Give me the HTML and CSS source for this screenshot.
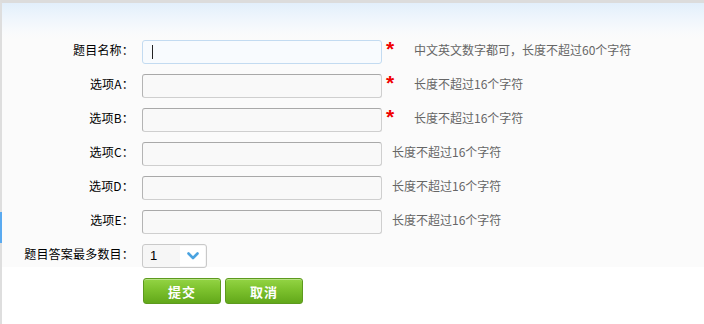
FILE: index.html
```html
<!DOCTYPE html>
<html lang="zh-CN">
<head>
    <meta charset="UTF-8">
    <title>添加题目</title>
    <link rel="stylesheet" href="styles.css">
</head>
<body>
    <div class="frame">
        <!-- left side marker -->
        <div class="side-mark"></div>

        <div class="panel">
            <div class="row">
                <label class="label">题目名称：</label>
                <div class="field focus"><span class="caret"></span></div>
                <span class="star">*</span>
                <span class="hint">中文英文数字都可，长度不超过60个字符</span>
            </div>
            <div class="row">
                <label class="label">选项A：</label>
                <div class="field"></div>
                <span class="star">*</span>
                <span class="hint">长度不超过16个字符</span>
            </div>
            <div class="row">
                <label class="label">选项B：</label>
                <div class="field"></div>
                <span class="star">*</span>
                <span class="hint">长度不超过16个字符</span>
            </div>
            <div class="row">
                <label class="label">选项C：</label>
                <div class="field"></div>
                <span class="hint plain">长度不超过16个字符</span>
            </div>
            <div class="row">
                <label class="label">选项D：</label>
                <div class="field"></div>
                <span class="hint plain">长度不超过16个字符</span>
            </div>
            <div class="row">
                <label class="label">选项E：</label>
                <div class="field"></div>
                <span class="hint plain">长度不超过16个字符</span>
            </div>
            <div class="row">
                <label class="label">题目答案最多数目：</label>
                <div class="select">
                    <span class="select-value">1</span>
                    <span class="select-btn">
                        <svg width="12" height="8" viewBox="0 0 12 8">
                            <path d="M1.5 1.5 L6 6 L10.5 1.5" fill="none" stroke="#4aa3e0" stroke-width="2.6" stroke-linecap="round" stroke-linejoin="round"/>
                        </svg>
                    </span>
                </div>
            </div>
        </div>

        <div class="actions">
            <button class="btn">提交</button>
            <button class="btn">取消</button>
        </div>
    </div>
</body>
</html>
```

FILE: styles.css
```css
body, html {
    margin: 0;
    padding: 0;
    background: #ffffff;
    font-family: "Noto Sans CJK SC", "Liberation Sans", sans-serif;
    font-size: 12px;
}

/* outer frame with grey top and left edges */
.frame {
    position: relative;
    height: 321px;
    border-top: 3px solid #dcdcdc;
    border-left: 2px solid #dedede;
}

.side-mark {
    position: absolute;
    left: -2px;
    top: 209px;
    width: 2px;
    height: 31px;
    background: #5aaaf0;
}

/* light panel holding the fields */
.panel {
    height: 227px;
    padding-top: 37px;
    background: linear-gradient(to bottom, #e2effb 0px, #eef5fc 14px, #f8fafc 28px, #fbfbfb 36px, #fbfbfb 100%);
}

.row {
    display: flex;
    align-items: center;
    height: 24px;
    margin-bottom: 10px;
}

.label {
    width: 132px;
    text-align: right;
    color: #000;
    flex-shrink: 0;
    padding-bottom: 5px;
    letter-spacing: 0.2px;
}

.field {
    box-sizing: border-box;
    width: 240px;
    height: 24px;
    margin-left: 8px;
    border: 1px solid #cfcfcf;
    border-top-color: #a9a9a9;
    border-left-color: #b4b4b4;
    border-radius: 3px;
    background: #f9f9f9;
    display: flex;
    align-items: center;
}

.field.focus {
    border: 1px solid #c3dbf1;
    background: #f8fbfe;
}

.caret {
    width: 1px;
    height: 14px;
    margin-left: 9px;
    background: #222;
}

.star {
    width: 9px;
    margin-left: 4px;
    align-self: flex-start;
    margin-top: -1px;
    color: #f00000;
    font-size: 21px;
    font-weight: bold;
    font-family: "Liberation Sans", sans-serif;
    line-height: 20px;
}

.hint {
    margin-left: 19px;
    color: #666;
    padding-bottom: 5px;
}

.hint.plain {
    margin-left: 10px;
}

/* dropdown */
.select {
    box-sizing: border-box;
    width: 65px;
    height: 24px;
    margin-left: 8px;
    border: 1px solid #c9c9c9;
    border-radius: 3px;
    background: #f6f6f6;
    display: flex;
    align-items: stretch;
}

.select-value {
    flex: 1;
    padding-left: 7px;
    line-height: 22px;
    color: #000;
    font-family: "Liberation Sans", sans-serif;
    font-size: 13px;
}

.select-btn {
    width: 25px;
    margin: 1px 1px 1px 0;
    background: #ffffff;
    display: flex;
    align-items: center;
    justify-content: center;
}

/* buttons */
.actions {
    display: flex;
    gap: 4px;
    padding-left: 141px;
    padding-top: 11px;
}

.btn {
    width: 78px;
    height: 26px;
    border: 1px solid #5d9a1e;
    border-radius: 3px;
    background: linear-gradient(to bottom, #93d444 0%, #7cc12d 45%, #62a81a 100%);
    box-shadow: inset 0 1px 0 rgba(255, 255, 255, 0.35);
    color: #ffffff;
    font-family: "Noto Sans CJK SC", sans-serif;
    font-size: 13px;
    font-weight: bold;
    letter-spacing: 1px;
    cursor: pointer;
    padding: 0;
}
```
